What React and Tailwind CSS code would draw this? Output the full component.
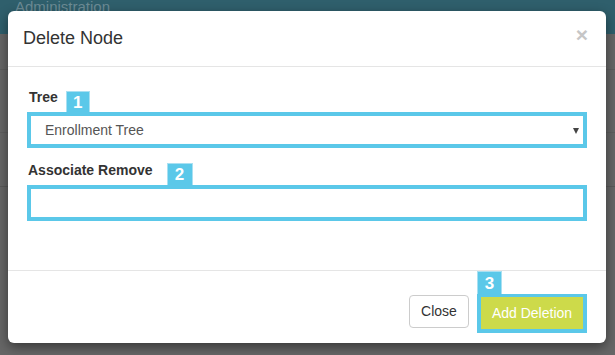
import React from "react";

const F = { fontFamily: '"Liberation Sans", Arial, sans-serif' };

function Badge({ n, className = "" }) {
  return (
    <div
      className={
        "flex items-center justify-center bg-[#5bc8e9] text-white font-bold text-[17px] leading-none border border-b-0 border-[#a9e0f2] " +
        className
      }
    >
      {n}
    </div>
  );
}

export default function App() {
  return (
    <div className="relative w-[615px] h-[355px] overflow-hidden bg-[#666666]" style={F}>
      {/* background page */}
      <div className="h-[34px] bg-[#2f5f6c] px-[15px] text-[15px] leading-[14px] text-[#6c8b95]">
        Administration
      </div>
      <div className="h-[36px] border-b border-[#5e5e5e]" />
      <div className="h-[63px] border-b border-[#5e5e5e]" />
      <div className="h-[54px] border-b border-[#595959]" />

      {/* modal */}
      <div className="absolute left-[8px] top-[11px] w-[598px] h-[332px] bg-white rounded-[6px] shadow-[0_4px_12px_rgba(0,0,0,0.45)] flex flex-col">
        <div className="h-[56px] shrink-0 border-b border-[#e5e5e5] flex items-center justify-between pl-[15px] pr-[18px] pb-[1px]">
          <div className="text-[18px] leading-[26px] text-[#333]">Delete Node</div>
          <div className="text-[21px] font-bold leading-none text-[#c6c6c6] -mt-[8px]">×</div>
        </div>

        <div className="px-[19px] pt-[21px] pb-[49px]">
          <div className="h-[24px] flex items-end">
            <div className="pl-[2px] mb-[5px] text-[14px] leading-[20px] font-bold text-[#333]">Tree</div>
            <Badge n="1" className="ml-[8px] w-[24px] h-[21px]" />
          </div>
          <div className="h-[36px] border-[4px] border-[#5bc8e9] flex items-center justify-between pl-[14px] pr-[4px]">
            <span className="text-[14px] text-[#555]">Enrollment Tree</span>
            <svg width="6" height="6" viewBox="0 0 6 6" className="mt-[1px]">
              <polygon points="0,0 6,0 3,6" fill="#444" />
            </svg>
          </div>

          <div className="h-[24px] flex items-end mt-[13px]">
            <div className="pl-[1px] mb-[5px] text-[14px] leading-[20px] font-bold text-[#333]">Associate Remove</div>
            <Badge n="2" className="ml-[14px] w-[26px] h-[22px]" />
          </div>
          <div className="h-[36px] border-[4px] border-[#5bc8e9]" />
        </div>

        <div className="flex-1 border-t border-[#e5e5e5] flex justify-end items-end pr-[19px] pb-[15px] gap-[8px]">
          <button className="mb-[5px] w-[60px] h-[33px] border border-[#cccccc] rounded-[4px] bg-white text-[14px] text-[#333]">
            Close
          </button>
          <div className="flex flex-col items-start">
            <Badge n="3" className="w-[25px] h-[23px]" />
            <div className="w-[110px] h-[39px] border-[4px] border-t-[3px] border-[#5bc8e9] bg-[#5bc8e9]">
              <div className="w-full h-full bg-[#cdda4a] flex items-center justify-center text-[14px] text-white">
                Add Deletion
              </div>
            </div>
          </div>
        </div>
      </div>
    </div>
  );
}
